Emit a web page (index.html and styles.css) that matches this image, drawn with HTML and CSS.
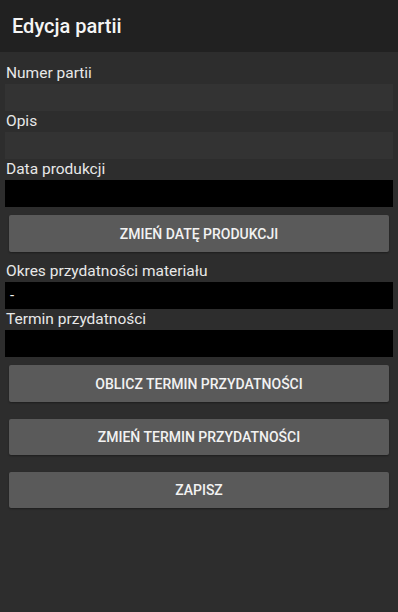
FILE: index.html
```html
<!DOCTYPE html>
<html lang="pl">
<head>
    <meta charset="UTF-8" />
    <meta name="viewport" content="width=device-width, initial-scale=1" />
    <title>Edycja partii</title>
    <link rel="stylesheet" href="styles.css">
</head>
<body>

    <div class="app-bar">
        <span class="app-title">Edycja partii</span>
    </div>

    <div class="form">
        <div class="field">
            <label class="field-label">Numer partii</label>
            <div class="field-input edit"></div>
        </div>
        <div class="field">
            <label class="field-label">Opis</label>
            <div class="field-input edit"></div>
        </div>
        <div class="field">
            <label class="field-label">Data produkcji</label>
            <div class="field-input readonly"></div>
        </div>
        <button class="btn">Zmień datę produkcji</button>

        <div class="field">
            <label class="field-label">Okres przydatności materiału</label>
            <div class="field-input readonly">-</div>
        </div>
        <div class="field">
            <label class="field-label">Termin przydatności</label>
            <div class="field-input readonly"></div>
        </div>
        <button class="btn">Oblicz termin przydatności</button>
        <button class="btn">Zmień termin przydatności</button>
        <button class="btn">Zapisz</button>
    </div>

</body>
</html>
```

FILE: styles.css
```css
body {
    font-family: Roboto, 'Noto Sans', sans-serif;
    background-color: #2d2d2d;
    color: #ececec;
    margin: 0;
    padding: 0;
    width: 398px;
    height: 612px;
    overflow: hidden;
}

.app-bar {
    height: 52px;
    background-color: #212121;
    display: flex;
    align-items: center;
    padding-left: 12px;
}

.app-title {
    font-size: 20px;
    font-weight: 500;
    color: #f5f5f5;
}

.form {
    display: flex;
    flex-direction: column;
    padding: 10px 5px 0 5px;
}

.field {
    display: flex;
    flex-direction: column;
}

.field-label {
    font-size: 15.5px;
    line-height: 21px;
    padding-left: 1px;
    color: #e8e8e8;
}

.field:first-child .field-label {
    line-height: 22px;
}

.field-input {
    height: 27px;
    font-size: 15px;
    line-height: 27px;
    padding-left: 5px;
    color: #f0f0f0;
}

.field-input.edit {
    background-color: #333333;
}

.field-input.readonly {
    background-color: #000000;
}

.btn {
    height: 37px;
    margin: 8px 4px 9px 4px;
    background-color: #5a5a5a;
    border: none;
    border-radius: 2px;
    box-shadow: 0 1px 2px rgba(0, 0, 0, 0.35);
    color: #f2f2f2;
    font-family: Roboto, 'Noto Sans', sans-serif;
    font-size: 14px;
    font-weight: 500;
    text-transform: uppercase;
    cursor: pointer;
}

.btn + .btn {
    margin-top: 8px;
    height: 36px;
}
```
